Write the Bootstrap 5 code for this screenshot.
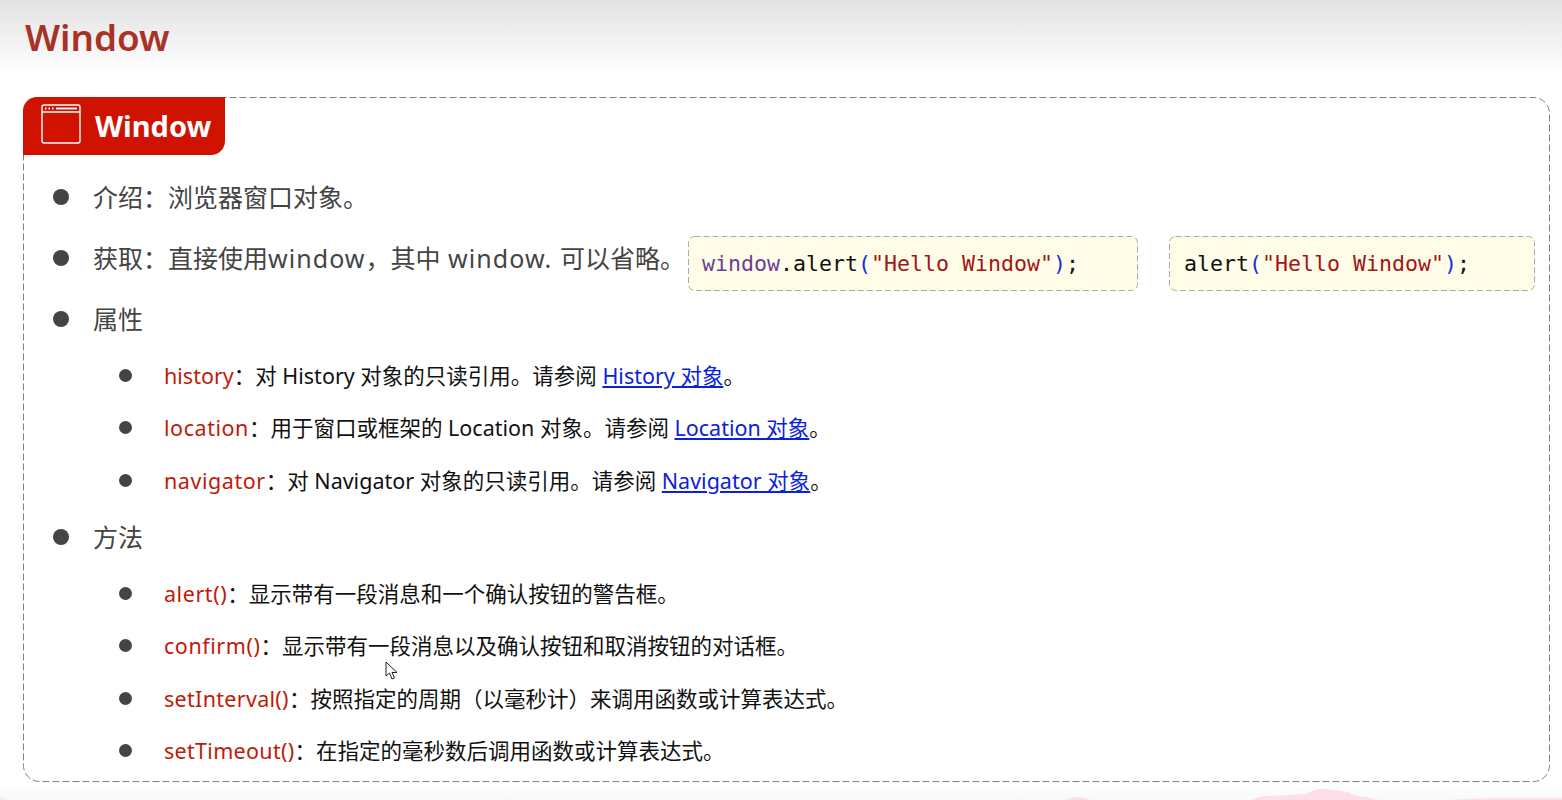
<!DOCTYPE html>
<html lang="zh-CN">
<head>
<meta charset="utf-8">
<title>Window</title>
<link href="https://cdn.jsdelivr.net/npm/bootstrap@5.3.0/dist/css/bootstrap.min.css" rel="stylesheet">
<style>
html,body{height:800px;overflow:hidden;background:#fff}
body{font-family:"Noto Sans","Noto Sans CJK SC",sans-serif;position:relative}
.top-band{height:75px;background:linear-gradient(#e2e2e2,#fff);padding:11px 0 0 25px}
.top-title{font-size:36.8px;line-height:52px;font-weight:600;color:#a93226;margin:0}
.dash-panel{margin:22px 12px 0 23px;height:685px;border:1px solid transparent;position:relative}
.dash-line{position:absolute;left:-1px;top:-1px;pointer-events:none}
.tag-head{margin:-1px 0 0 -1px;width:202px;height:58px;background:#d01300;border-radius:14px 0 14px 0;color:#fff;font-size:29px;font-weight:700;gap:14px;padding-left:18px;position:relative}
.tag-icon{margin-top:-4px}
.lv1{font-size:25px;line-height:34px;color:#444;padding-left:69px;position:relative}
.lv2{font-size:21.5px;line-height:30px;color:#111;padding-left:140px;position:relative}
.lv1::before,.lv2::before{content:"";position:absolute;border-radius:50%;background:#444}
.lv1::before{width:16px;height:16px;left:29px;top:9px}
.lv2::before{width:13px;height:13px;left:95px;top:8px}
.kw{color:#c01a08}
.sp-a{letter-spacing:.55px}.sp-b{letter-spacing:.3px}
.lat{letter-spacing:1.05px}
.ln{color:#0a22d8;text-decoration:underline}
.list-stack{display:flex;flex-direction:column}
.r1{margin-top:25px}.r3{margin-top:27px}
.s1{margin-top:25px}.s2{margin-top:22px}.s3{margin-top:23px}
.m0{margin-top:24px}.t1{margin-top:25px}.t2{margin-top:22px}.t3{margin-top:23px}.t4{margin-top:22px}
.code-row{margin-top:27px;height:34px}
.get-text{width:664px;flex:none}
.code-box{height:55px;margin-top:-5px;background:#fffde8;border-radius:6px;font-family:"DejaVu Sans Mono","Liberation Mono",monospace;font-size:21.6px;line-height:55px;color:#111;padding-left:14px;position:relative;flex:none}
.code-box svg{position:absolute;left:0;top:0}
.cb1{width:450px}.cb2{width:366px;margin-left:31px;padding-left:15px}
.c-w{color:#6a3f9a}.c-p{color:#1a2fd0}.c-s{color:#a31515}
.foot-blobs{position:absolute;left:0;bottom:0;width:1562px;height:18px;background:linear-gradient(#fff,#f9f9f9)}
.cursor-mark{position:absolute;left:385px;top:661px}
</style>
</head>
<body>
<header class="top-band"><h1 class="top-title">Window</h1></header>
<main class="dash-panel">
  <svg class="dash-line" width="1527" height="685" fill="none" stroke="#808080" stroke-width="1" stroke-dasharray="7 3"><rect x=".5" y=".5" width="1526" height="684" rx="16"/></svg>
  <div class="tag-head d-flex align-items-center">
    <svg class="tag-icon" width="40" height="40" viewBox="0 0 40 40" fill="none" stroke="#fff" stroke-width="1.4"><rect x="1" y="1" width="38" height="38" rx="2"/><path d="M1 8H39"/><path d="M15 4.500H36" stroke-width="1.800"/><path d="M4 4.500h1.500M7.500 4.500h1.500M11 4.500h1.500" stroke-width="1.800"/></svg>
    <span>Window</span>
  </div>
  <div class="list-stack">
    <div class="lv1 r1">介绍：浏览器窗口对象。</div>
    <div class="d-flex code-row">
      <div class="lv1 get-text">获取：直接使用<span class="lat">window</span>，其中<span class="lat"> window. </span>可以省略。</div>
      <div class="code-box cb1"><svg width="450" height="55" fill="none" stroke="#a9a9a9" stroke-dasharray="6 3"><rect x=".5" y=".5" width="449" height="54" rx="6"/></svg><span class="c-w">window</span>.alert<span class="c-p">(</span><span class="c-s">"Hello Window"</span><span class="c-p">)</span>;</div>
      <div class="code-box cb2"><svg width="366" height="55" fill="none" stroke="#a9a9a9" stroke-dasharray="6 3"><rect x=".5" y=".5" width="365" height="54" rx="6"/></svg>alert<span class="c-p">(</span><span class="c-s">"Hello Window"</span><span class="c-p">)</span>;</div>
    </div>
    <div class="lv1 r3">属性</div>
    <div class="lv2 s1"><span class="kw">history</span>：对 History 对象的只读引用。请参阅 <span class="ln">History 对象</span>。</div>
    <div class="lv2 s2"><span class="kw sp-a">location</span>：用于窗口或框架的 Location 对象。请参阅 <span class="ln">Location 对象</span>。</div>
    <div class="lv2 s3"><span class="kw sp-a">navigator</span>：对 Navigator 对象的只读引用。请参阅 <span class="ln">Navigator 对象</span>。</div>
    <div class="lv1 m0">方法</div>
    <div class="lv2 t1"><span class="kw sp-a">alert()</span>：显示带有一段消息和一个确认按钮的警告框。</div>
    <div class="lv2 t2"><span class="kw sp-a">confirm()</span>：显示带有一段消息以及确认按钮和取消按钮的对话框。</div>
    <div class="lv2 t3"><span class="kw sp-b">setInterval()</span>：按照指定的周期（以毫秒计）来调用函数或计算表达式。</div>
    <div class="lv2 t4"><span class="kw sp-b">setTimeout()</span>：在指定的毫秒数后调用函数或计算表达式。</div>
  </div>
</main>
<svg class="foot-blobs" viewBox="0 0 1562 18" fill="#fddfe8"><path d="M1065 18q6-3 12-3t13 3z"/><path d="M1252 18q6-4 20-4l34-2q10-6 20-5l22 3q8 5 18 5l11 3z"/><path d="M1448 18q30-2 60-2t54 0v2z"/><path d="M0 18h8q-4-3-8-3z" fill="#fde8ee"/></svg>
<svg class="cursor-mark" width="14" height="20" viewBox="0 0 14 20" fill="#fff" stroke="#222" stroke-width="1"><path d="M1 1V15L4.500 12L7 18L9.500 17L7 11.500H12Z"/></svg>
</body>
</html>
